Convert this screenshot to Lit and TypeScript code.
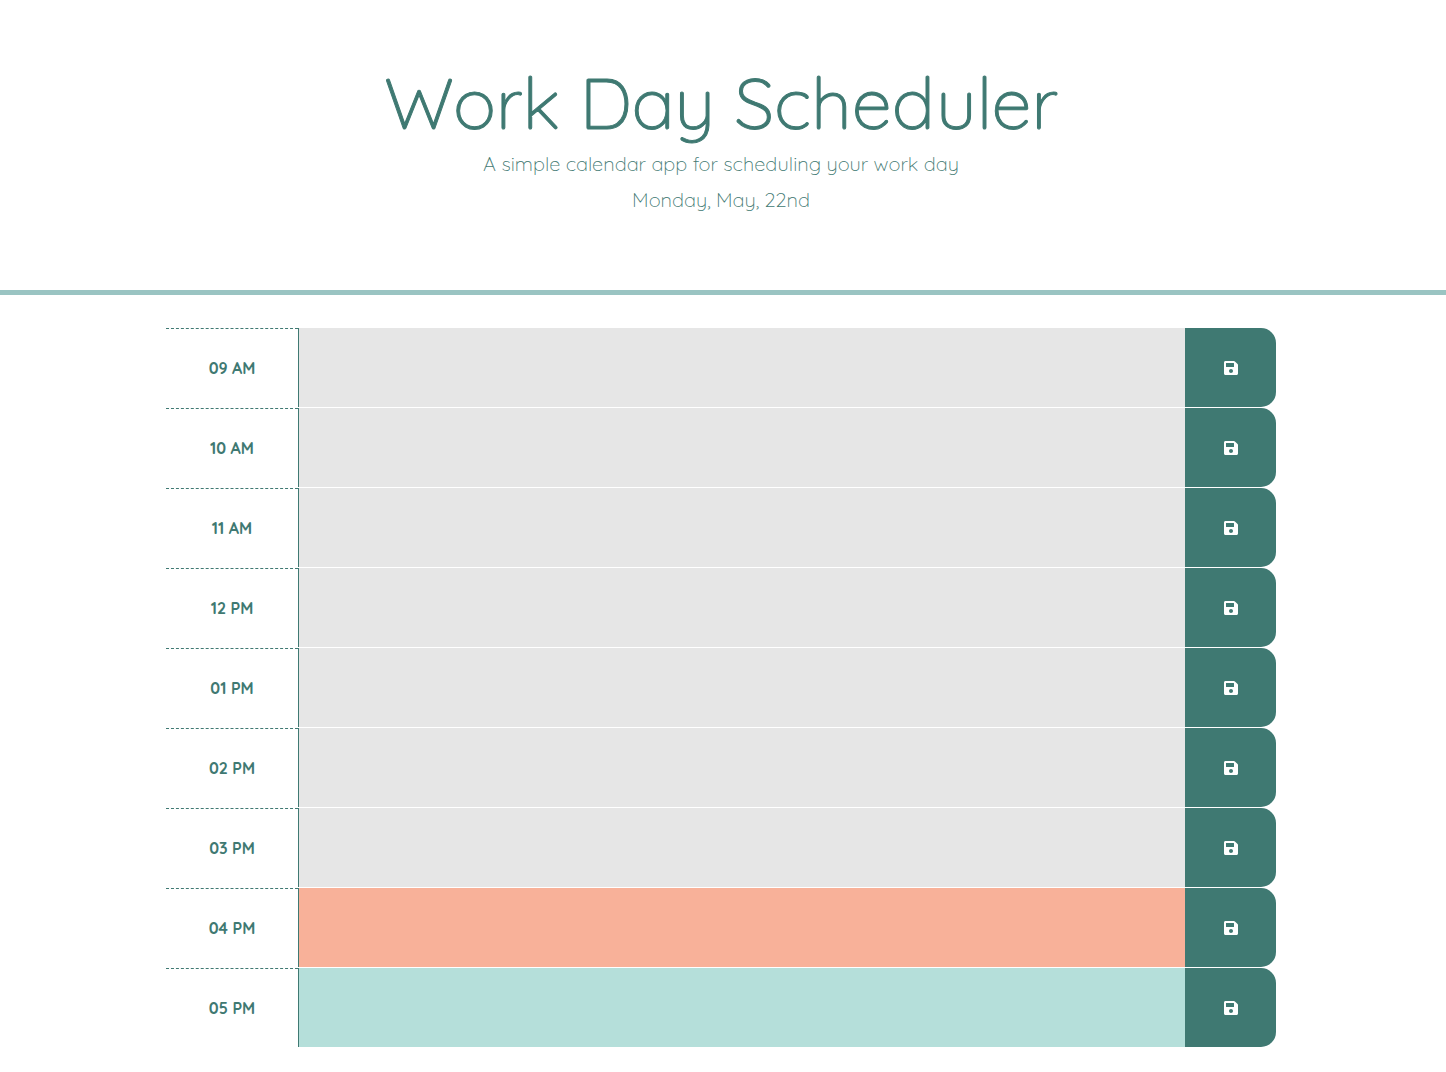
import { LitElement, html, css } from "lit";
import { customElement, property, state } from "lit/decorators.js";

type Phase = "past" | "present" | "future";

interface Slot {
  label: string;
  phase: Phase;
}

@customElement("time-block")
class TimeBlock extends LitElement {
  @property() label = "";
  @property() phase: Phase = "past";
  @state() private text = "";

  static styles = css`
    :host {
      display: block;
    }
    .row {
      display: grid;
      grid-template-columns: 132px minmax(0, 1fr) 91px;
      min-height: 79px;
    }
    .hour {
      box-sizing: border-box;
      display: flex;
      align-items: center;
      justify-content: center;
      border-top: 1px dashed #3f7972;
      color: #3f7972;
      font-size: 16px;
      font-weight: 700;
      line-height: 24px;
    }
    .entry {
      box-sizing: border-box;
      display: block;
      width: 100%;
      height: 100%;
      margin: 0;
      padding: 8px;
      border: 0;
      border-left: 1px solid #3f7972;
      border-radius: 0;
      outline-offset: -2px;
      resize: none;
      color: #000;
      font: inherit;
    }
    .past {
      background: #e6e6e6;
    }
    .present {
      background: #f8b199;
    }
    .future {
      background: #b5dfda;
    }
    .save {
      display: flex;
      align-items: center;
      justify-content: center;
      margin: 0;
      padding: 0;
      border: 0;
      border-radius: 0 15px 15px 0;
      background: #3f7972;
      color: #fff;
      cursor: pointer;
    }
    .icon {
      display: block;
      width: 14px;
      height: 16px;
      fill: currentColor;
    }
  `;

  private onInput(e: Event) {
    this.text = (e.target as HTMLTextAreaElement).value;
  }

  private onSave() {
    this.dispatchEvent(
      new CustomEvent("save-slot", {
        detail: { label: this.label, text: this.text },
        bubbles: true,
        composed: true,
      })
    );
  }

  render() {
    return html`
      <div class="row">
        <label class="hour" for="entry">${this.label}</label>
        <textarea
          id="entry"
          class="entry ${this.phase}"
          .value=${this.text}
          @input=${this.onInput}
        ></textarea>
        <button class="save" type="button" aria-label="Save" @click=${this.onSave}>
          <svg class="icon" viewBox="0 0 448 512" aria-hidden="true">
            <path
              d="M433.941 129.941l-83.882-83.882A48 48 0 0 0 316.118 32H48C21.49 32 0 53.49 0 80v352c0 26.51 21.49 48 48 48h352c26.51 0 48-21.49 48-48V163.882a48 48 0 0 0-14.059-33.941zM224 416c-35.346 0-64-28.654-64-64 0-35.346 28.654-64 64-64s64 28.654 64 64c0 35.346-28.654 64-64 64zm96-304.52V212c0 6.627-5.373 12-12 12H76c-6.627 0-12-5.373-12-12V108c0-6.627 5.373-12 12-12h228.52c3.183 0 6.235 1.264 8.485 3.515l3.48 3.48A11.996 11.996 0 0 1 320 111.48z"
            />
          </svg>
        </button>
      </div>
    `;
  }
}

@customElement("app-root")
class AppRoot extends LitElement {
  @state() private slots: Slot[] = [
    { label: "09 AM", phase: "past" },
    { label: "10 AM", phase: "past" },
    { label: "11 AM", phase: "past" },
    { label: "12 PM", phase: "past" },
    { label: "01 PM", phase: "past" },
    { label: "02 PM", phase: "past" },
    { label: "03 PM", phase: "past" },
    { label: "04 PM", phase: "present" },
    { label: "05 PM", phase: "future" },
  ];

  static styles = css`
    :host {
      display: block;
      background: #fff;
      color: #3f7972;
      font-family: Quicksand, Lato, sans-serif;
      font-size: 16px;
    }
    .header {
      display: flex;
      flex-direction: column;
      gap: 6px;
      padding: 61px 20px 75px 16px;
      border-bottom: 5px solid #9ac4c2;
      text-align: center;
    }
    .title {
      margin: 0;
      font-size: 72px;
      font-weight: 300;
      line-height: 82px;
      -webkit-text-stroke: 1px currentColor;
    }
    .lead {
      margin: 0;
      font-size: 20px;
      font-weight: 350;
      line-height: 30px;
    }
    .schedule {
      padding: 33px 20px 24px 16px;
    }
    .blocks {
      display: flex;
      flex-direction: column;
      gap: 1px;
      max-width: 1110px;
      margin: 0 auto;
    }
  `;

  render() {
    return html`
      <header class="header">
        <h1 class="title">Work Day Scheduler</h1>
        <p class="lead">A simple calendar app for scheduling your work day</p>
        <p class="lead">Monday, May, 22nd</p>
      </header>
      <main class="schedule">
        <div class="blocks">
          ${this.slots.map(
            (s) => html`<time-block .label=${s.label} .phase=${s.phase}></time-block>`
          )}
        </div>
      </main>
    `;
  }
}
